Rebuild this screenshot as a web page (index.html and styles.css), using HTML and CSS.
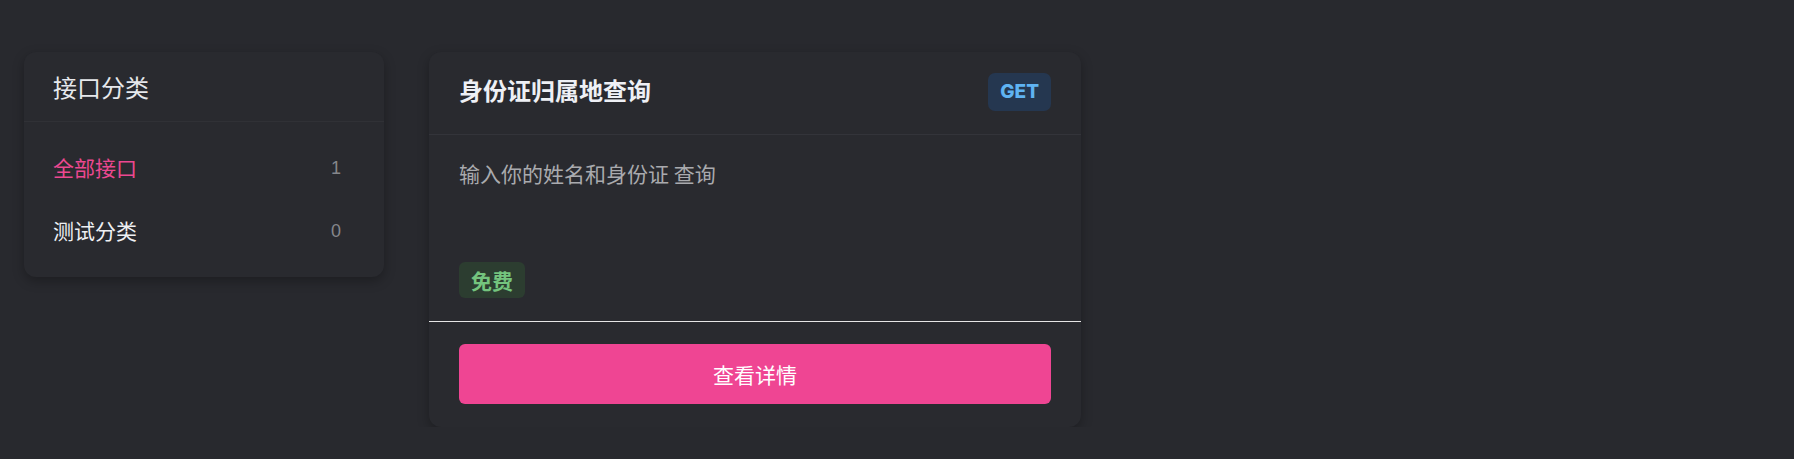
FILE: index.html
```html
<!DOCTYPE html>
<html lang="zh-CN">
<head>
<meta charset="utf-8">
<title>API</title>
<link rel="stylesheet" href="styles.css">
</head>
<body>
<div class="page">
  <aside class="side card">
    <div class="side-head">接口分类</div>
    <ul class="side-list">
      <li class="side-item active"><span>全部接口</span><span class="count">1</span></li>
      <li class="side-item"><span>测试分类</span><span class="count">0</span></li>
    </ul>
  </aside>
  <section class="api card">
    <div class="api-head">
      <h2 class="api-title">身份证归属地查询</h2>
      <span class="method">GET</span>
    </div>
    <div class="api-body">
      <p class="api-desc">输入你的姓名和身份证 查询</p>
      <span class="free">免费</span>
    </div>
    <div class="api-foot">
      <button class="detail-btn">查看详情</button>
    </div>
  </section>
</div>
</body>
</html>
```
FILE: styles.css
```css
html, body {
  margin: 0;
  padding: 0;
  background: #28292e;
  font-family: "Noto Sans CJK SC", "Noto Sans", sans-serif;
}
.page {
  display: flex;
  align-items: flex-start;
  gap: 45px;
  padding: 52px 0 0 24px;
}
.card {
  background: #292a2f;
  border-radius: 12px;
  box-shadow: 0 4px 12px rgba(0, 0, 0, 0.28);
}
.side {
  width: 360px;
}
.side-head {
  height: 69px;
  display: flex;
  align-items: center;
  padding: 0 29px;
  font-size: 24px;
  color: #e6e8ec;
  border-bottom: 1px solid #303136;
}
.side-list {
  list-style: none;
  margin: 0;
  padding: 13px 43px 16px 29px;
}
.side-item {
  height: 63px;
  display: flex;
  align-items: center;
  justify-content: space-between;
  font-size: 21px;
  color: #eef0f3;
}
.side-item.active {
  color: #ec4890;
}
.count {
  margin-top: 4px;
  font-family: "Liberation Sans", Arial, sans-serif;
  font-size: 18px;
  color: #85868b;
}
.api {
  width: 652px;
}
.api-head {
  display: flex;
  align-items: center;
  justify-content: space-between;
  padding: 21px 30px 23px;
  border-bottom: 1px solid #33343a;
}
.api-title {
  margin: 0 0 4px;
  font-size: 24px;
  font-weight: 700;
  color: #eef0f5;
  line-height: 34px;
}
.method {
  height: 38px;
  line-height: 38px;
  padding: 0 12px;
  border-radius: 7px;
  background: #253750;
  color: #5fb3f2;
  font-family: Inter, "Liberation Sans", sans-serif;
  font-weight: 800;
  font-size: 19px;
}
.api-body {
  padding: 22px 30px 23px;
  border-bottom: 1px solid #e6e6e6;
}
.api-desc {
  margin: 0 0 9px;
  font-size: 21px;
  line-height: 32px;
  min-height: 96px;
  color: #a9aaae;
}
.free {
  display: inline-block;
  height: 36px;
  line-height: 36px;
  padding: 0 12px;
  border-radius: 6px;
  background: #2c3d30;
  color: #74c47e;
  font-size: 21px;
  font-weight: 700;
  vertical-align: top;
}
.api-foot {
  padding: 22px 30px 23px;
}
.detail-btn {
  display: block;
  width: 100%;
  height: 60px;
  border: 0;
  border-radius: 6px;
  background: #ef4593;
  color: #ffffff;
  font-family: "Noto Sans CJK SC", sans-serif;
  font-size: 21px;
  cursor: pointer;
}
```
